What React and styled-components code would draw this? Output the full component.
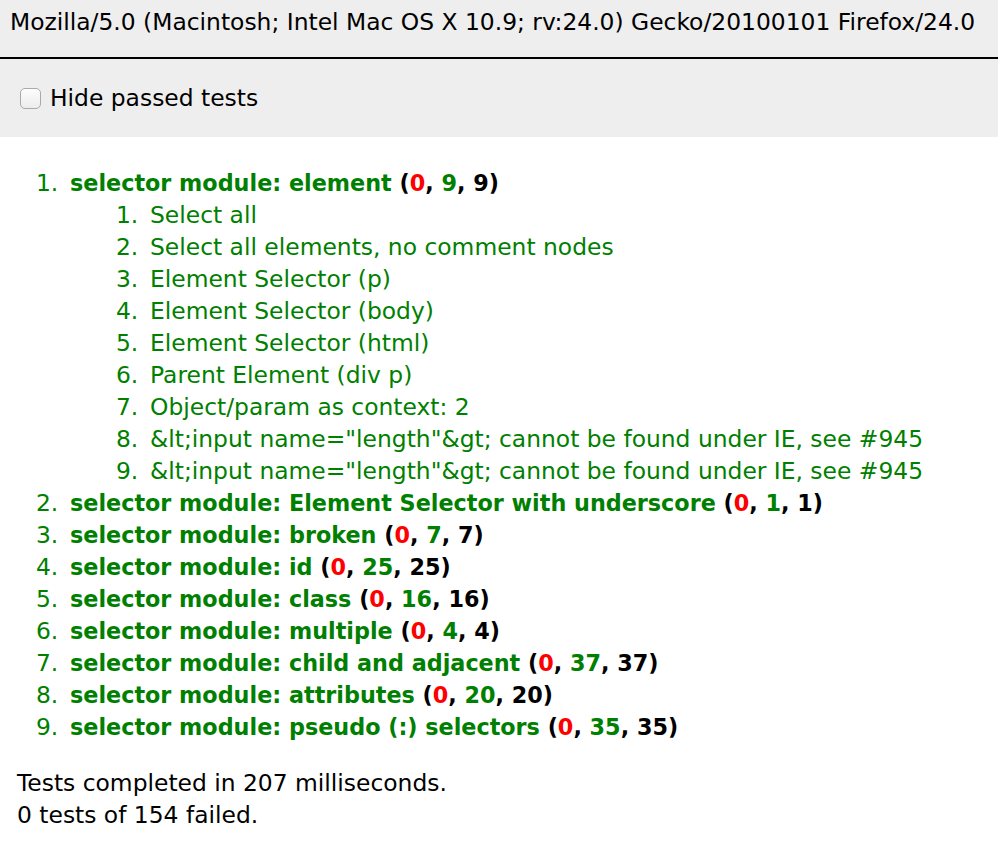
import React from "react";
import styled, { createGlobalStyle } from "styled-components";

const GlobalStyle = createGlobalStyle`
  body {
    margin: 0;
    background: #fff;
    font-family: "DejaVu Sans", Verdana, sans-serif;
    font-size: 23.4px;
    color: #000;
  }
`

const Banner = styled.h2`
  margin: 0;
  height: 59px;
  box-sizing: border-box;
  padding: 6px 10px 0;
  line-height: 32px;
  font-size: 23.4px;
  font-weight: normal;
  background-color: #eee;
  border-bottom: 2px solid #000;
  white-space: nowrap;
`

const Toolbar = styled.div`
  height: 78px;
  box-sizing: border-box;
  padding-left: 20px;
  background-color: #eee;
  display: flex;
  align-items: center;
  gap: 9px;
`

const Check = styled.input`
  appearance: none;
  margin: 0;
  width: 21px;
  height: 21px;
  border: 1px solid #a9a9a9;
  border-radius: 5px;
  background: linear-gradient(#fdfdfd, #ececec);
  box-shadow: inset 0 1px 1px rgba(255, 255, 255, 0.8);
`

const Tests = styled.ol`
  margin: 30px 0 24px;
  padding-left: 70px;
  line-height: 32px;

  li {
    color: #008000;
  }

  li::marker {
    content: counter(list-item) ".\\2002 ";
    font-weight: normal;
    font-size: 23.4px;
  }
`

const SubTests = styled.ol`
  margin: 0;
  padding-left: 80px;
  font-weight: normal;
`

const Name = styled.strong`
  font-weight: bold;
  font-size: 22.3px;
`

const Counts = styled.b`
  color: #000;
`

const Count = styled.span`
  color: ${({ kind }) => (kind === "fail" ? "#ff0000" : kind === "pass" ? "#008000" : "#000")};
`

const Result = styled.p`
  margin: 0;
  padding-left: 17px;
  line-height: 32px;
`

const modules = [
  {
    name: "selector module: element",
    pass: 9,
    tests: [
      "Select all",
      "Select all elements, no comment nodes",
      "Element Selector (p)",
      "Element Selector (body)",
      "Element Selector (html)",
      "Parent Element (div p)",
      "Object/param as context: 2",
      '&lt;input name="length"&gt; cannot be found under IE, see #945',
      '&lt;input name="length"&gt; cannot be found under IE, see #945',
    ],
  },
  { name: "selector module: Element Selector with underscore", pass: 1 },
  { name: "selector module: broken", pass: 7 },
  { name: "selector module: id", pass: 25 },
  { name: "selector module: class", pass: 16 },
  { name: "selector module: multiple", pass: 4 },
  { name: "selector module: child and adjacent", pass: 37 },
  { name: "selector module: attributes", pass: 20 },
  { name: "selector module: pseudo (:) selectors", pass: 35 },
]

const App = () => {
  return (
    <>
      <GlobalStyle />
      <Banner>Mozilla/5.0 (Macintosh; Intel Mac OS X 10.9; rv:24.0) Gecko/20100101 Firefox/24.0</Banner>
      <Toolbar>
        <Check type="checkbox" id="hide-passed" />
        <label htmlFor="hide-passed">Hide passed tests</label>
      </Toolbar>
      <Tests>
        {modules.map((mod, index) => (
          <li key={index}>
            <Name>
              {mod.name}{" "}
              <Counts>
                (<Count kind="fail">0</Count>, <Count kind="pass">{mod.pass}</Count>, {mod.pass})
              </Counts>
            </Name>
            {mod.tests && (
              <SubTests>
                {mod.tests.map((t, i) => (
                  <li key={i}>{t}</li>
                ))}
              </SubTests>
            )}
          </li>
        ))}
      </Tests>
      <Result>Tests completed in 207 milliseconds.</Result>
      <Result>0 tests of 154 failed.</Result>
    </>
  )
}

export default App
